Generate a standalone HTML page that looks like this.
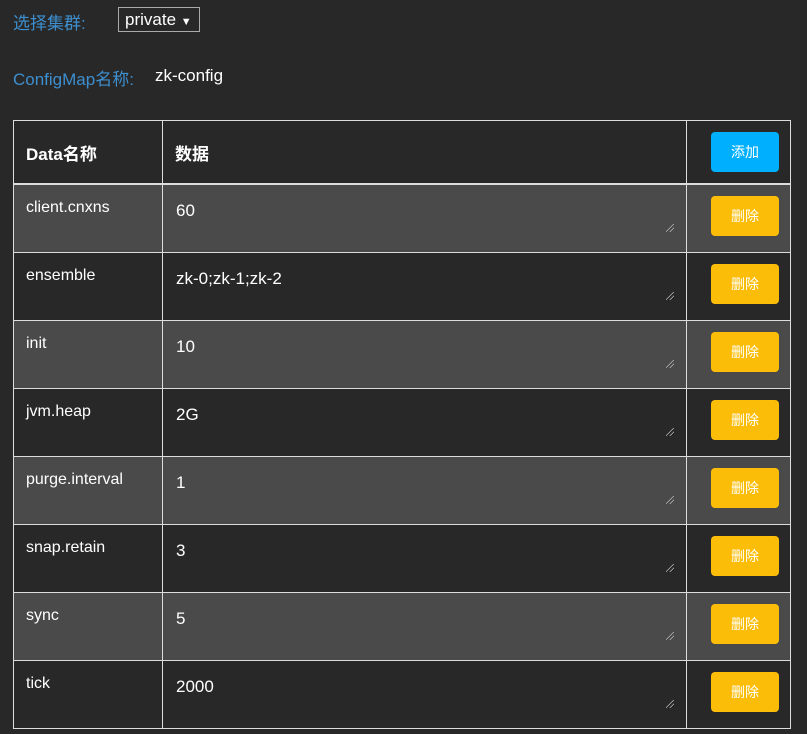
<!DOCTYPE html>
<html><head><meta charset="utf-8"><style>
body{margin:0;background:#282828;width:807px;height:734px;overflow:hidden;font-family:"Liberation Sans","Noto Sans CJK SC",sans-serif;color:#fff;position:relative}
.lbl{position:absolute;color:#3d8fcf;font-size:17px}
.sel{position:absolute;left:118px;top:7px;width:82px;height:25px;border:1px solid #aaa;box-sizing:border-box;font-size:17px;line-height:23px;padding-left:6px}
table{position:absolute;left:13px;top:120px;border-collapse:collapse;width:778px}
td{border:1px solid #ddd;padding:0;vertical-align:top;position:relative;height:67px}
tr.h td{height:62px;border-bottom:2px solid #ddd;font-weight:bold;font-size:17px;vertical-align:middle;padding:0 0 0 12px}
tr.g td{background:#4a4a4a}
.k{position:absolute;left:12px;top:14px;font-size:16px}
.v{position:absolute;left:13px;top:16px;font-size:17px}
.grip{position:absolute;right:12px;bottom:20px;width:8px;height:8px;background:linear-gradient(135deg,transparent 45%,#bbb 45%,#bbb 52%,transparent 52%,transparent 70%,#bbb 70%,#bbb 77%,transparent 77%)}
.b{position:absolute;left:24px;top:11px;width:68px;height:40px;border-radius:4px;background:#fbbd08;color:#fff;font-size:14px;font-weight:normal;line-height:40px;text-align:center}
.add{background:#00b0ff;top:11px}
</style></head><body>
<div class="lbl" style="left:13px;top:9px">选择集群:</div>
<div class="sel">private <span style="font-size:11px">▼</span></div>
<div class="lbl" style="left:13px;top:65px">ConfigMap名称:</div>
<div style="position:absolute;left:155px;top:66px;font-size:17px">zk-config</div>
<table>
<tr class="h"><td style="width:136px">Data名称</td><td style="width:511px">数据</td><td style="padding:0"><div class="b add">添加</div></td></tr>
<tr class="g"><td><div class="k">client.cnxns</div></td><td><div class="v">60</div><div class="grip"></div></td><td><div class="b">删除</div></td></tr>
<tr><td><div class="k">ensemble</div></td><td><div class="v">zk-0;zk-1;zk-2</div><div class="grip"></div></td><td><div class="b">删除</div></td></tr>
<tr class="g"><td><div class="k">init</div></td><td><div class="v">10</div><div class="grip"></div></td><td><div class="b">删除</div></td></tr>
<tr><td><div class="k">jvm.heap</div></td><td><div class="v">2G</div><div class="grip"></div></td><td><div class="b">删除</div></td></tr>
<tr class="g"><td><div class="k">purge.interval</div></td><td><div class="v">1</div><div class="grip"></div></td><td><div class="b">删除</div></td></tr>
<tr><td><div class="k">snap.retain</div></td><td><div class="v">3</div><div class="grip"></div></td><td><div class="b">删除</div></td></tr>
<tr class="g"><td><div class="k">sync</div></td><td><div class="v">5</div><div class="grip"></div></td><td><div class="b">删除</div></td></tr>
<tr><td><div class="k">tick</div></td><td><div class="v">2000</div><div class="grip"></div></td><td><div class="b">删除</div></td></tr>
</table>
</body></html>
